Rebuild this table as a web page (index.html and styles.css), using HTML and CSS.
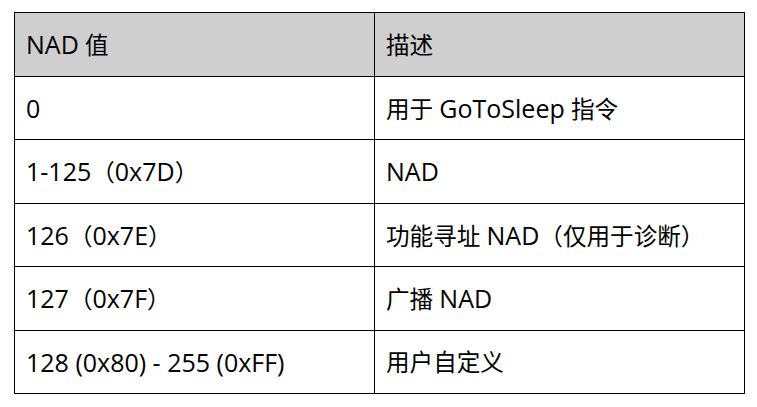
FILE: index.html
```html
<!DOCTYPE html>
<html lang="zh">
<head>
<meta charset="utf-8">
<link rel="stylesheet" href="styles.css">
</head>
<body>
<table class="nad-table">
  <colgroup><col class="c1"><col class="c2"></colgroup>
  <thead>
    <tr class="r-a"><th><span class="en">NAD</span> 值</th><th>描述</th></tr>
  </thead>
  <tbody>
    <tr class="r-b"><td><span class="en">0</span></td><td>用于 <span class="en">GoToSleep</span> 指令</td></tr>
    <tr class="r-a"><td><span class="en">1-125</span>（<span class="en">0x7D</span>）</td><td><span class="en">NAD</span></td></tr>
    <tr class="r-b"><td><span class="en">126</span>（<span class="en">0x7E</span>）</td><td>功能寻址 <span class="en">NAD</span>（仅用于诊断）</td></tr>
    <tr class="r-a"><td><span class="en">127</span>（<span class="en">0x7F</span>）</td><td>广播 <span class="en">NAD</span></td></tr>
    <tr class="r-b"><td><span class="en">128 (0x80) - 255 (0xFF)</span></td><td>用户自定义</td></tr>
  </tbody>
</table>
</body>
</html>
```
FILE: styles.css
```css
html, body {
  margin: 0;
  padding: 0;
  background: #ffffff;
}
body {
  padding: 12px 0 0 14px;
  font-family: "Open Sans", "Noto Sans CJK SC", sans-serif;
  font-size: 23.6px;
  color: #000;
}
.nad-table {
  border-collapse: collapse;
  width: 730px;
  table-layout: fixed;
}
.c1 { width: 360px; }
.c2 { width: 370px; }
.nad-table th,
.nad-table td {
  border: 1px solid #000;
  padding: 0 0 0 11px;
  text-align: left;
  font-weight: normal;
  vertical-align: middle;
  line-height: 30px;
  white-space: nowrap;
}
.nad-table thead th {
  background: #d0cfd0;
}
.en {
  font-size: 25px;
}
.r-a { height: 64px; }
.r-b { height: 63px; }
```
